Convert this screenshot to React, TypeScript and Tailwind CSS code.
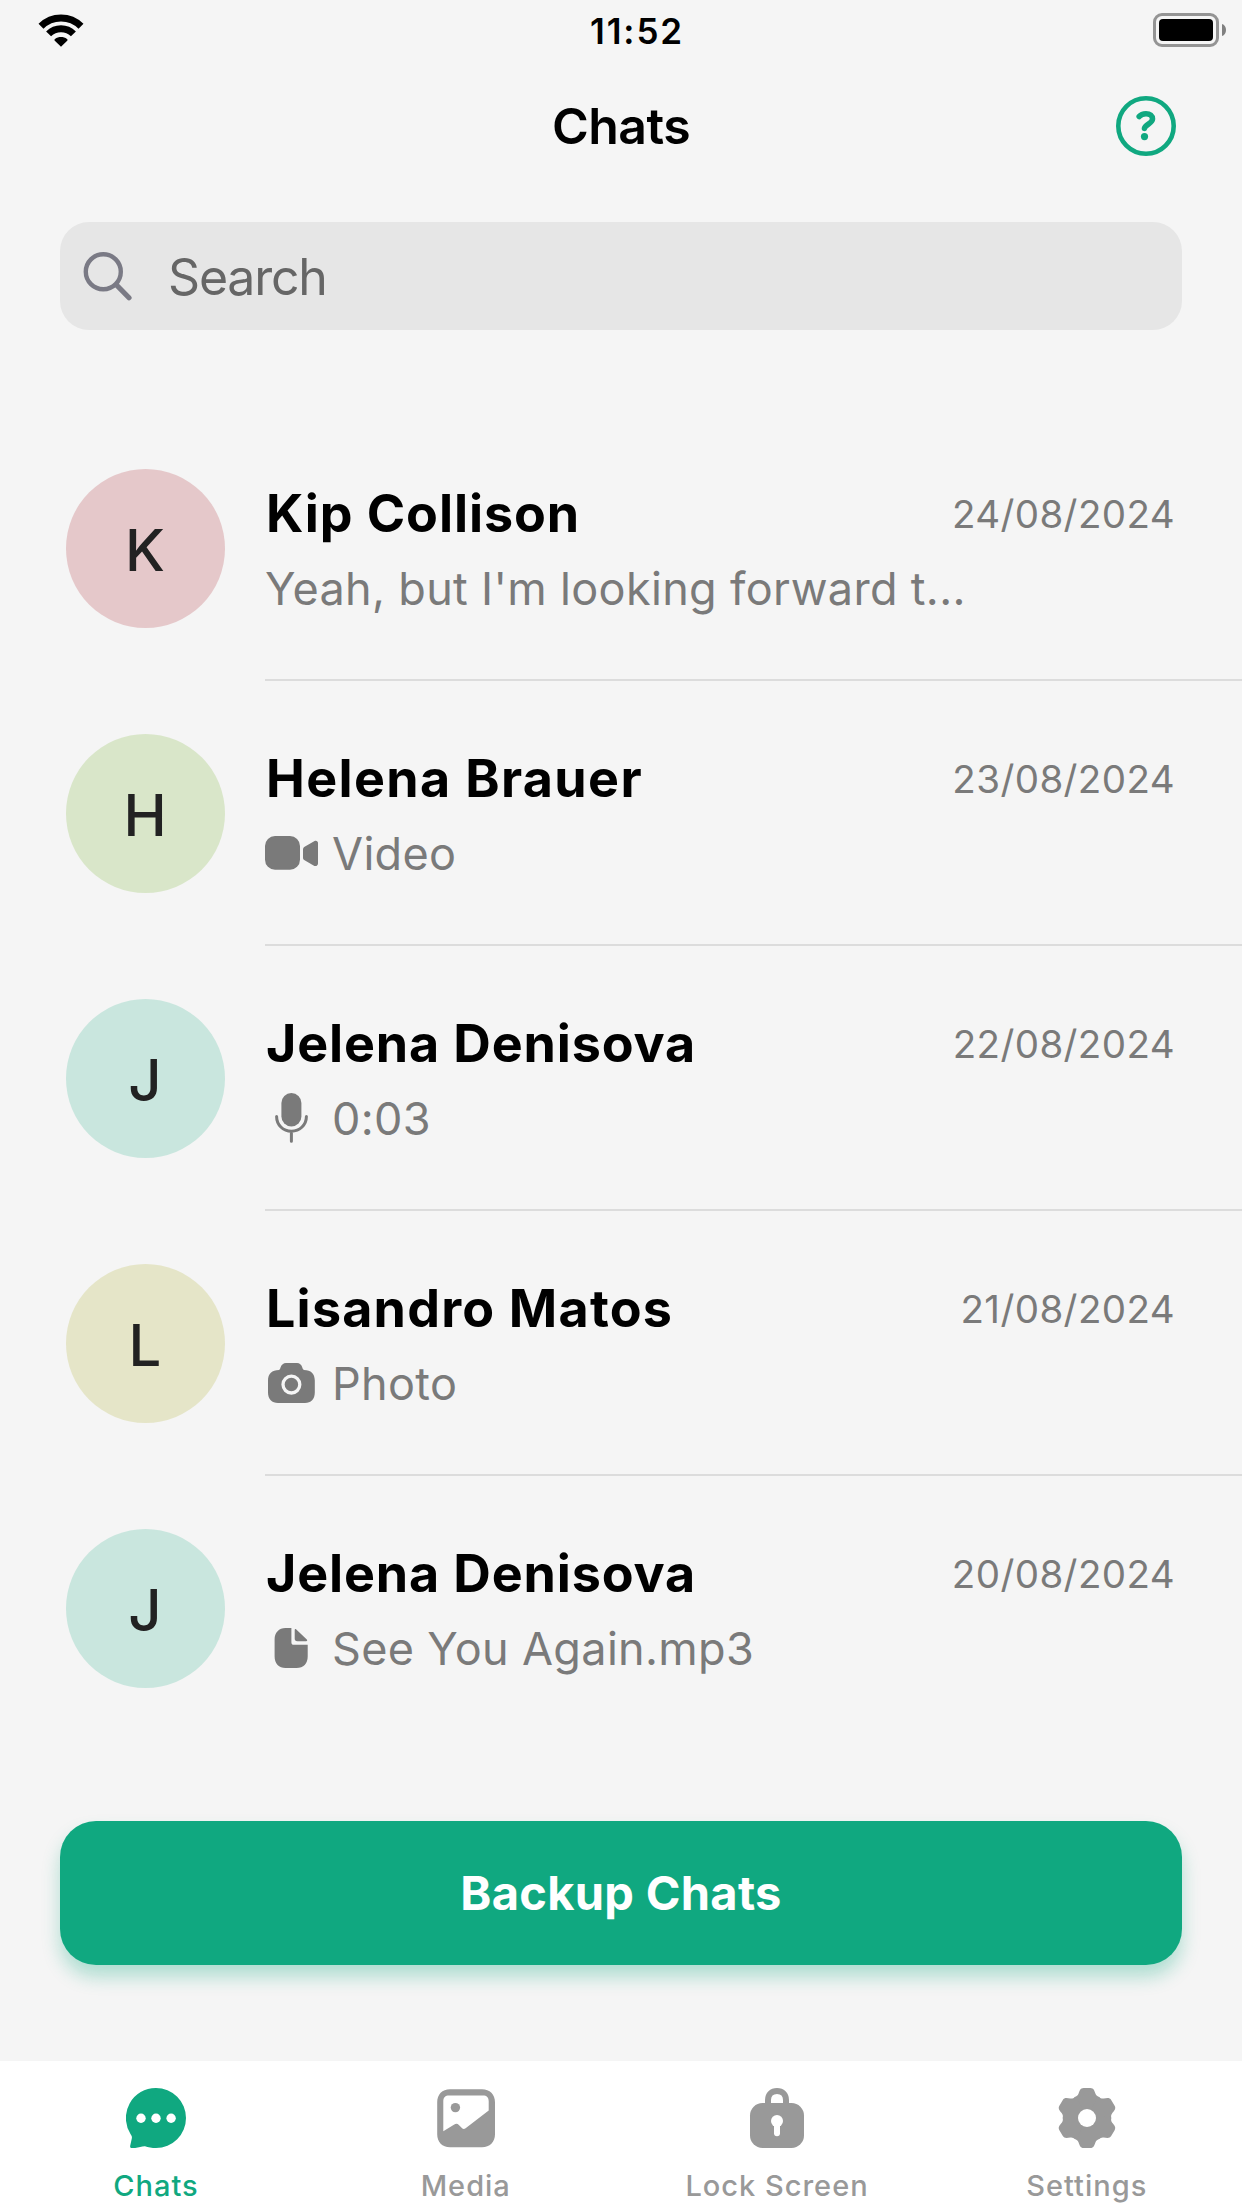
import type { ReactNode } from 'react';

type Chat = {
  name: string;
  tracking: string;
  date: string;
  initial: string;
  avatar: string;
  preview: string;
  icon?: ReactNode;
};

function WifiIcon() {
  return (
    <svg className="h-[34px] w-[48px]" viewBox="0 0 48 34" fill="none">
      <path d="M4 13.3A28.3 28.3 0 0 1 44 13.3" stroke="#000" strokeWidth="7" />
      <path d="M11.6 20.9A17.5 17.5 0 0 1 36.4 20.9" stroke="#000" strokeWidth="7" />
      <path d="M24 33.7L17.8 27.7C17.2 27 17.3 26.4 18 25.9C21.5 23.4 26.5 23.4 30 25.9C30.7 26.4 30.8 27 30.2 27.7Z" fill="#000" />
    </svg>
  );
}

function BatteryIcon() {
  return (
    <svg className="h-[34px] w-[74px]" viewBox="0 0 74 34" fill="none">
      <rect x="1.5" y="1.5" width="63" height="31" rx="7.5" stroke="#949494" strokeWidth="3" />
      <rect x="6" y="6" width="54" height="22" rx="4" fill="#000" />
      <path d="M69 11C71.6 11.8 73 14 73 17S71.6 22.2 69 23Z" fill="#808080" />
    </svg>
  );
}

function HelpIcon() {
  return (
    <svg className="size-[60px]" viewBox="0 0 60 60" fill="none" stroke="#10a880">
      <circle cx="30" cy="30" r="27.7" strokeWidth="4.6" />
      <path d="M23.2 20.6C25 18.3 27.5 17.7 30 17.7C34 17.7 36.6 19.8 36.5 23C36.3 27.6 29.3 28.2 28.5 32.3" strokeWidth="5.6" strokeLinecap="round" />
      <circle cx="28.5" cy="40.6" r="3.6" fill="#10a880" stroke="none" />
    </svg>
  );
}

function SearchIcon() {
  return (
    <svg className="size-[50px]" viewBox="0 0 50 50" fill="none" stroke="#7a7a85">
      <circle cx="20.3" cy="20.7" r="17.5" strokeWidth="4.4" />
      <path d="M33.5 34L46 46.7" strokeWidth="5.2" strokeLinecap="round" />
    </svg>
  );
}

function VideoIcon() {
  return (
    <svg className="-mt-[2px] h-[34px] w-[53px]" viewBox="0 0 53 34" fill="#7a7a7a">
      <rect width="35" height="33.7" rx="10" />
      <path d="M38 13.5C38 12.2 38.5 11.3 39.6 10.7L49.6 5C51.3 4.2 53 5.2 53 7V27.5C53 29.4 51.3 30.6 49.4 29.9L39.6 24.3C38.5 23.7 38 22.8 38 21.5Z" />
    </svg>
  );
}

function MicIcon() {
  return (
    <svg className="-mt-[2px] h-[50px] w-[53px]" viewBox="0 0 53 50" fill="none" stroke="#7a7a7a" strokeWidth="3" strokeLinecap="round">
      <rect x="16.4" y="0" width="20" height="33.5" rx="10" fill="#7a7a7a" stroke="none" />
      <path d="M11.6 23.5C11.6 31.8 18 38.2 26.4 38.2S41.4 31.8 41.4 23.5M26.4 38.5V48.3" />
    </svg>
  );
}

function CameraIcon() {
  return (
    <svg className="-mt-[2px] h-[40px] w-[53px]" viewBox="0 0 53 40">
      <path fill="#7a7a7a" d="M14 7C15 6.5 15.2 5.5 15.5 4.5C16.5 1.5 18.5 0 21 0H32C34.5 0 36.5 1.5 37.3 4.5C37.6 5.7 38 6.5 39 7C46 7 49.8 11 49.8 17.5V29.5C49.8 36 46 40 40 40H13C7 40 3 36 3 29.5V17.5C3 11 7 7 14 7Z" />
      <circle cx="26.4" cy="21.6" r="8.4" fill="none" stroke="#f5f5f5" strokeWidth="3.3" />
    </svg>
  );
}

function DocumentIcon() {
  return (
    <svg className="-mt-[2px] h-[40px] w-[53px]" viewBox="0 0 53 40" fill="#7a7a7a">
      <path d="M20.5 0H26.4V14.5C26.4 16 27.3 16.8 28.7 16.8H42.7V28.5C42.7 35.5 38.5 40 31.5 40H20.5C14 40 9.6 35.5 9.6 28.5V11.5C9.6 4.5 14 0 20.5 0Z" />
      <path d="M29.7 2C29.7 1 30.6 .8 31.3 1.5L41.8 11.5C42.5 12.3 42.2 13.2 41.2 13.2H32.3C30.6 13.2 29.7 12.4 29.7 10.8Z" />
    </svg>
  );
}

function ChatsTabIcon() {
  return (
    <svg className="size-[60px]" viewBox="0 0 60 60">
      <path fill="#10a880" d="M30 0A30 30 0 1 1 30 60C26 60 22 59.2 19 58.2C15.5 58 11.5 60.2 6.2 60.2C4.6 60.2 3.9 59.3 4.2 57.8L5.8 50.5C6.2 48.5 5.6 47.6 4.5 46A30 30 0 0 1 30 0Z" />
      <g fill="#fff">
        <circle cx="15" cy="30.3" r="4.7" />
        <circle cx="30" cy="30.3" r="4.7" />
        <circle cx="45.1" cy="30.3" r="4.7" />
      </g>
    </svg>
  );
}

function MediaTabIcon() {
  return (
    <svg className="size-[60px]" viewBox="0 0 60 60" fill="#999">
      <path fillRule="evenodd" d="M14 1.3H46C53.8 1.3 59 6.5 59 14.3V46.3C59 54 53.8 59.3 46 59.3H14C6.2 59.3 1.2 54 1.2 46.3V14.3C1.2 6.5 6.2 1.3 14 1.3ZM13 7.5C9.3 7.5 7.3 9.5 7.3 13.2V43.3L18.3 36.5C20 35.5 21.5 35.6 22.9 37L25.9 40C27 41.2 28.3 41.2 29.6 40.2L52.7 22.5V13.2C52.7 9.5 50.7 7.5 47 7.5Z" />
      <circle cx="19.4" cy="19.6" r="4.7" />
    </svg>
  );
}

function LockTabIcon() {
  return (
    <svg className="size-[60px]" viewBox="0 0 60 60">
      <path d="M21 17V12C21 6.5 24.8 3 30 3S39 6.5 39 12V17" fill="none" stroke="#999" strokeWidth="6" />
      <rect x="3" y="15" width="54" height="45" rx="12.5" fill="#999" />
      <circle cx="30" cy="33" r="6" fill="#fff" />
      <path d="M30 35V45.2" stroke="#fff" strokeWidth="6" strokeLinecap="round" />
    </svg>
  );
}

const gearAngles = [0, 60, 120, 180, 240, 300];

function SettingsTabIcon() {
  return (
    <svg className="size-[60px]" viewBox="-30 -30 60 60" fill="#999">
      <circle r="22" />
      {gearAngles.map((angle) => (
        <path
          key={angle}
          transform={`rotate(${angle})`}
          d="M-13 -19.5L-12.3 -20.9C-10.5 -21.7 -9.2 -22.3 -8.5 -24.2C-7.5 -27 -6.8 -30 -3.3 -30H3.3C6.8 -30 7.5 -27 8.5 -24.2C9.2 -22.3 10.5 -21.7 12.3 -20.9L13 -19.5L0 0Z"
        />
      ))}
      <circle r="9" fill="#fff" />
    </svg>
  );
}

const chats: Chat[] = [
  { name: 'Kip Collison', tracking: 'tracking-[0.93px]', date: '24/08/2024', initial: 'K', avatar: 'bg-[#e5c8ca]', preview: "Yeah, but I'm looking forward t..." },
  { name: 'Helena Brauer', tracking: 'tracking-[1.35px]', date: '23/08/2024', initial: 'H', avatar: 'bg-[#d9e6c9]', preview: 'Video', icon: <VideoIcon /> },
  { name: 'Jelena Denisova', tracking: 'tracking-[0.85px]', date: '22/08/2024', initial: 'J', avatar: 'bg-[#c9e6de]', preview: '0:03', icon: <MicIcon /> },
  { name: 'Lisandro Matos', tracking: 'tracking-[1.2px]', date: '21/08/2024', initial: 'L', avatar: 'bg-[#e5e5c8]', preview: 'Photo', icon: <CameraIcon /> },
  { name: 'Jelena Denisova', tracking: 'tracking-[0.85px]', date: '20/08/2024', initial: 'J', avatar: 'bg-[#c9e6de]', preview: 'See You Again.mp3', icon: <DocumentIcon /> },
];

const tabs = [
  { label: 'Chats', color: 'text-[#10a880]', icon: <ChatsTabIcon /> },
  { label: 'Media', color: 'text-[#999999]', icon: <MediaTabIcon /> },
  { label: 'Lock Screen', color: 'text-[#999999]', icon: <LockTabIcon /> },
  { label: 'Settings', color: 'text-[#999999]', icon: <SettingsTabIcon /> },
];

function ChatRow({ chat }: { chat: Chat }) {
  return (
    <li className="group flex h-[265px] pl-[66px]">
      <div className={`mt-[53px] flex size-[159px] shrink-0 items-center justify-center rounded-full pt-[3px] pr-px ${chat.avatar}`}>
        <span className="text-[58px] leading-none font-medium text-[#222222]">{chat.initial}</span>
      </div>
      <div className="ml-[40px] flex-1 border-b-2 border-[#dcdcdc] pt-[68px] pr-[67px] group-last:border-transparent">
        <div className="flex h-[60px] items-center justify-between pl-px">
          <h2 className={`text-[52px] leading-[60px] font-bold text-black ${chat.tracking}`}>{chat.name}</h2>
          <time className="text-[38.5px] leading-[58px] tracking-[0.4px] text-[#7a7a7a]">{chat.date}</time>
        </div>
        <div className="mt-[15px] flex h-[60px] items-center gap-[14px]">
          {chat.icon}
          <p className="text-[45px] leading-[60px] tracking-[0.33px] whitespace-nowrap text-[#7a7a7a]">{chat.preview}</p>
        </div>
      </div>
    </li>
  );
}

export default function App() {
  return (
    <div className="flex h-[2208px] w-[1242px] flex-col overflow-hidden bg-[#f5f5f5] font-['Inter',sans-serif]">
      <div className="grid h-[60px] grid-cols-[1fr_auto_1fr] items-center px-[15px]">
        <div className="pl-[22px]">
          <WifiIcon />
        </div>
        <span className="pt-px pl-[32px] text-[35px] leading-[56px] font-semibold tracking-[1.9px] text-black">11:52</span>
        <div className="flex justify-end">
          <BatteryIcon />
        </div>
      </div>

      <header className="grid h-[132px] grid-cols-[60px_1fr_60px] items-center px-[66px]">
        <h1 className="col-start-2 text-center text-[50px] leading-none font-semibold tracking-[-0.55px] text-black">Chats</h1>
        <HelpIcon />
      </header>

      <label className="mx-[60px] mt-[30px] flex h-[108px] items-center rounded-[29px] bg-[#e6e6e6] pl-[23px]">
        <SearchIcon />
        <span className="ml-[35px] pt-[2px] text-[50px] leading-none tracking-[-1.2px] text-[#666666]">Search</span>
      </label>

      <ul className="mt-[86px]">
        {chats.map((chat) => (
          <ChatRow key={chat.date} chat={chat} />
        ))}
      </ul>

      <button className="mx-[60px] mt-[80px] h-[144px] shrink-0 rounded-[36px] bg-[#10a880] text-[47px] font-bold tracking-[0.3px] text-white shadow-[0_12px_18px_rgba(16,168,128,0.3)]">
        Backup Chats
      </button>

      <nav className="mt-[96px] grid h-[147px] shrink-0 grid-cols-4 bg-white">
        {tabs.map((tab) => (
          <div key={tab.label} className={`flex flex-col items-center pt-[27px] odd:pl-[1.5px] ${tab.color}`}>
            {tab.icon}
            <span className="mt-[17.5px] text-[29px] leading-[40px] font-medium tracking-[1px]">{tab.label}</span>
          </div>
        ))}
      </nav>
    </div>
  );
}
